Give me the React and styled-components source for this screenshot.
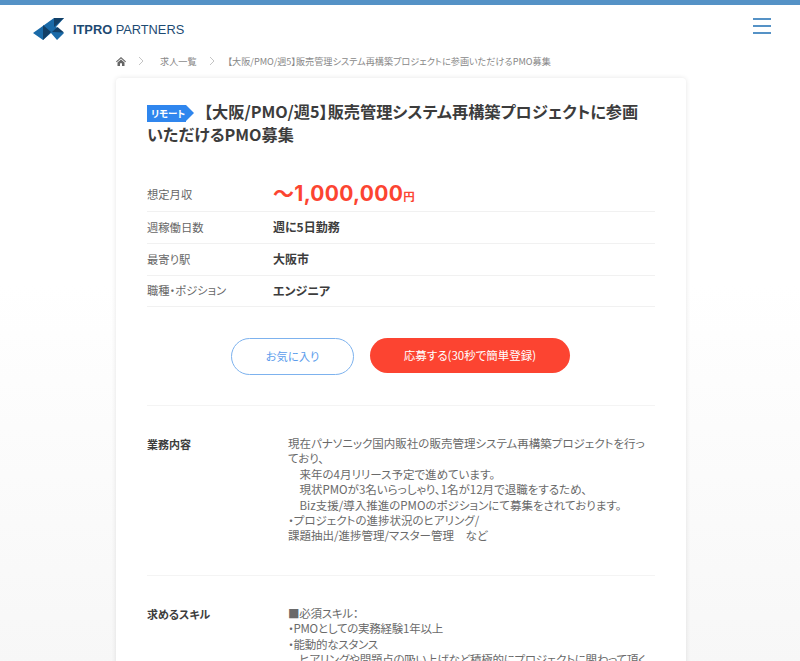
import React from 'react';
import styled, { createGlobalStyle } from 'styled-components';

const Global = createGlobalStyle`
  html, body {
    margin: 0;
    padding: 0;
    background: #fff;
  }
  body {
    height: 661px;
    overflow: hidden;
    font-family: "Noto Sans CJK JP", "Noto Sans", sans-serif;
    color: #555;
    font-feature-settings: "palt";
  }
`;

const Page = styled.div`
  height: 661px;
  overflow: hidden;
  border-top: 5px solid #5592c6;
  box-sizing: border-box;
  background: linear-gradient(#fff 280px, #f7f7f7 660px);
`;

const Header = styled.header`
  height: 42px;
  display: flex;
  align-items: flex-start;
  justify-content: space-between;
  padding: 13px 29px 0 33px;
  box-sizing: border-box;
`;

const Logo = styled.div`
  display: flex;
  align-items: center;
  gap: 9px;
`;

const LogoText = styled.span`
  font-family: "Liberation Sans", sans-serif;
  font-size: 12.8px;
  color: #1d4a72;
  b {
    font-weight: 700;
  }
`;

const Burger = styled.div`
  width: 18px;
  height: 16px;
  display: flex;
  flex-direction: column;
  justify-content: space-between;
  span {
    display: block;
    height: 2px;
    background: #5592c6;
  }
`;

const Crumbs = styled.nav`
  height: 28px;
  margin: 0 0 3px 116px;
  display: flex;
  align-items: center;
  font-size: 9.15px;
  color: #888;
`;

const Chevron = styled.span`
  display: inline-flex;
  margin: 0 ${(p) => p.$after}px 0 12px;
`;

const Card = styled.main`
  width: 570px;
  margin-left: 116px;
  box-sizing: border-box;
  background: #fff;
  border-radius: 4px;
  box-shadow: 0 0 5px rgba(0, 0, 0, 0.1);
  padding: 22px 31px 0;
  height: 700px;
`;

const Title = styled.h1`
  margin: 0 0 30px;
  font-size: 16.2px;
  line-height: 23px;
  font-weight: 700;
  color: #3c3c3c;
`;

const Tag = styled.span`
  display: inline-block;
  vertical-align: 1px;
  position: relative;
  height: 17px;
  line-height: 17px;
  width: 39px;
  padding-left: 4px;
  box-sizing: border-box;
  margin-right: 18px;
  background: #2f86ee;
  color: #fff;
  font-size: 9.5px;
  font-weight: 700;
  &::after {
    content: '';
    position: absolute;
    left: 39px;
    top: 0;
    border-style: solid;
    border-width: 8.5px 0 8.5px 8px;
    border-color: transparent transparent transparent #2f86ee;
  }
`;

const Row = styled.div`
  display: flex;
  align-items: center;
  height: ${(p) => p.$h}px;
  padding-bottom: ${(p) => (p.$first ? 0 : 2)}px;
  border-bottom: 1px solid #f1f1f1;
`;

const Label = styled.div`
  width: 126px;
  font-size: 11.3px;
  color: #666;
`;

const Value = styled.div`
  font-size: 12px;
  font-weight: 700;
  color: #3c3c3c;
`;

const Salary = styled.div`
  color: #fc4431;
  font-family: Inter, "Noto Sans CJK JP", sans-serif;
  font-size: 21px;
  letter-spacing: 0.3px;
  font-weight: 700;
  display: flex;
  align-items: baseline;
  margin-bottom: 4px;
  small {
    font-family: "Noto Sans CJK JP", sans-serif;
    font-size: 11.5px;
    letter-spacing: 0;
  }
`;

const Buttons = styled.div`
  display: flex;
  justify-content: center;
  align-items: flex-start;
  gap: 16px;
  padding: 31px 1px 30px 0;
  border-bottom: 1px solid #f4f4f4;
`;

const FavButton = styled.button`
  width: 123px;
  height: 37px;
  padding: 0 0 2px;
  background: #fff;
  border: 1px solid #7db2ee;
  border-radius: 19px;
  color: #5b9cec;
  font: inherit;
  font-size: 11.3px;
`;

const ApplyButton = styled.button`
  width: 200px;
  height: 35px;
  padding: 0 0 2px;
  background: #fc4431;
  border: 0;
  border-radius: 18px;
  color: #fff;
  font: inherit;
  font-size: 11.5px;
`;

const Section = styled.section`
  display: flex;
  padding: 30px 0 31px;
  border-bottom: 1px solid #f4f4f4;
`;

const SectionLabel = styled.div`
  width: 141px;
  flex-shrink: 0;
  padding-top: 1px;
  font-size: 11px;
  line-height: 15.4px;
  font-weight: 700;
  color: #3c3c3c;
`;

const SectionBody = styled.div`
  font-size: 11.5px;
  line-height: 15.4px;
  color: #6a6a6a;
  white-space: pre-wrap;
  width: 363px;
  letter-spacing: ${(p) => (p.$tight ? -0.25 : 0)}px;
`;

const jobText = `現在パナソニック国内販社の販売管理システム再構築プロジェクトを行っており、
　来年の4月リリース予定で進めています。
　現状PMOが3名いらっしゃり、1名が12月で退職をするため、
　Biz支援/導入推進のPMOのポジションにて募集をされております。
・プロジェクトの進捗状況のヒアリング/
課題抽出/進捗管理/マスター管理　など`;

const skillText = `■必須スキル：
・PMOとしての実務経験1年以上
・能動的なスタンス
　ヒアリングや問題点の吸い上げなど積極的にプロジェクトに関わって頂く`;

const LogoMark = () => (
  <svg width="31" height="22" viewBox="0 0 31 22">
    <path d="M0 15 L21 0 H31 L23 9 L31 15 L24 22 L18 15 L10 22 Z" fill="#1a6aa8" />
    <path d="M10 7 L18 14 L10 22 Z" fill="#123f66" />
    <path d="M21 0 H31 L21 9 Z" fill="#123f66" />
    <path d="M19 14 L24.5 9 L31 14.5 Z" fill="#123f66" />
  </svg>
);

const Arrow = () => (
  <svg width="6" height="10" viewBox="0 0 6 10">
    <path d="M1 1 L5 5 L1 9" fill="none" stroke="#b5b5b5" strokeWidth="0.8" />
  </svg>
);

const HomeIcon = () => (
  <svg width="10" height="9" viewBox="0 0 10 9">
    <path d="M5 0 L10 4.5 L9.3 5.2 L5 1.4 L0.7 5.2 L0 4.5 Z M1.5 5.4 L5 2.4 L8.5 5.4 V9 H6 V6.2 H4 V9 H1.5 Z" fill="#666" />
  </svg>
);

export default function App() {
  return (
    <Page>
      <Global />
      <Header>
        <Logo>
          <LogoMark />
          <LogoText><b>ITPRO</b> PARTNERS</LogoText>
        </Logo>
        <Burger><span /><span /><span /></Burger>
      </Header>
      <Crumbs>
        <HomeIcon />
        <Chevron $after={16}><Arrow /></Chevron>
        <span>求人一覧</span>
        <Chevron $after={13}><Arrow /></Chevron>
        <span>【大阪/PMO/週5】販売管理システム再構築プロジェクトに参画いただけるPMO募集</span>
      </Crumbs>
      <Card>
        <Title>
          <Tag>リモート</Tag>
          【大阪/PMO/週5】販売管理システム再構築プロジェクトに参画<br />いただけるPMO募集
        </Title>
        <Row $first $h={35}>
          <Label>想定月収</Label>
          <Salary>〜1,000,000<small>円</small></Salary>
        </Row>
        <Row $h={29}>
          <Label>週稼働日数</Label>
          <Value>週に5日勤務</Value>
        </Row>
        <Row $h={29}>
          <Label>最寄り駅</Label>
          <Value>大阪市</Value>
        </Row>
        <Row $h={28}>
          <Label>職種・ポジション</Label>
          <Value>エンジニア</Value>
        </Row>
        <Buttons>
          <FavButton>お気に入り</FavButton>
          <ApplyButton>応募する(30秒で簡単登録)</ApplyButton>
        </Buttons>
        <Section>
          <SectionLabel>業務内容</SectionLabel>
          <SectionBody>{jobText}</SectionBody>
        </Section>
        <Section>
          <SectionLabel>求めるスキル</SectionLabel>
          <SectionBody $tight>{skillText}</SectionBody>
        </Section>
      </Card>
    </Page>
  );
}
